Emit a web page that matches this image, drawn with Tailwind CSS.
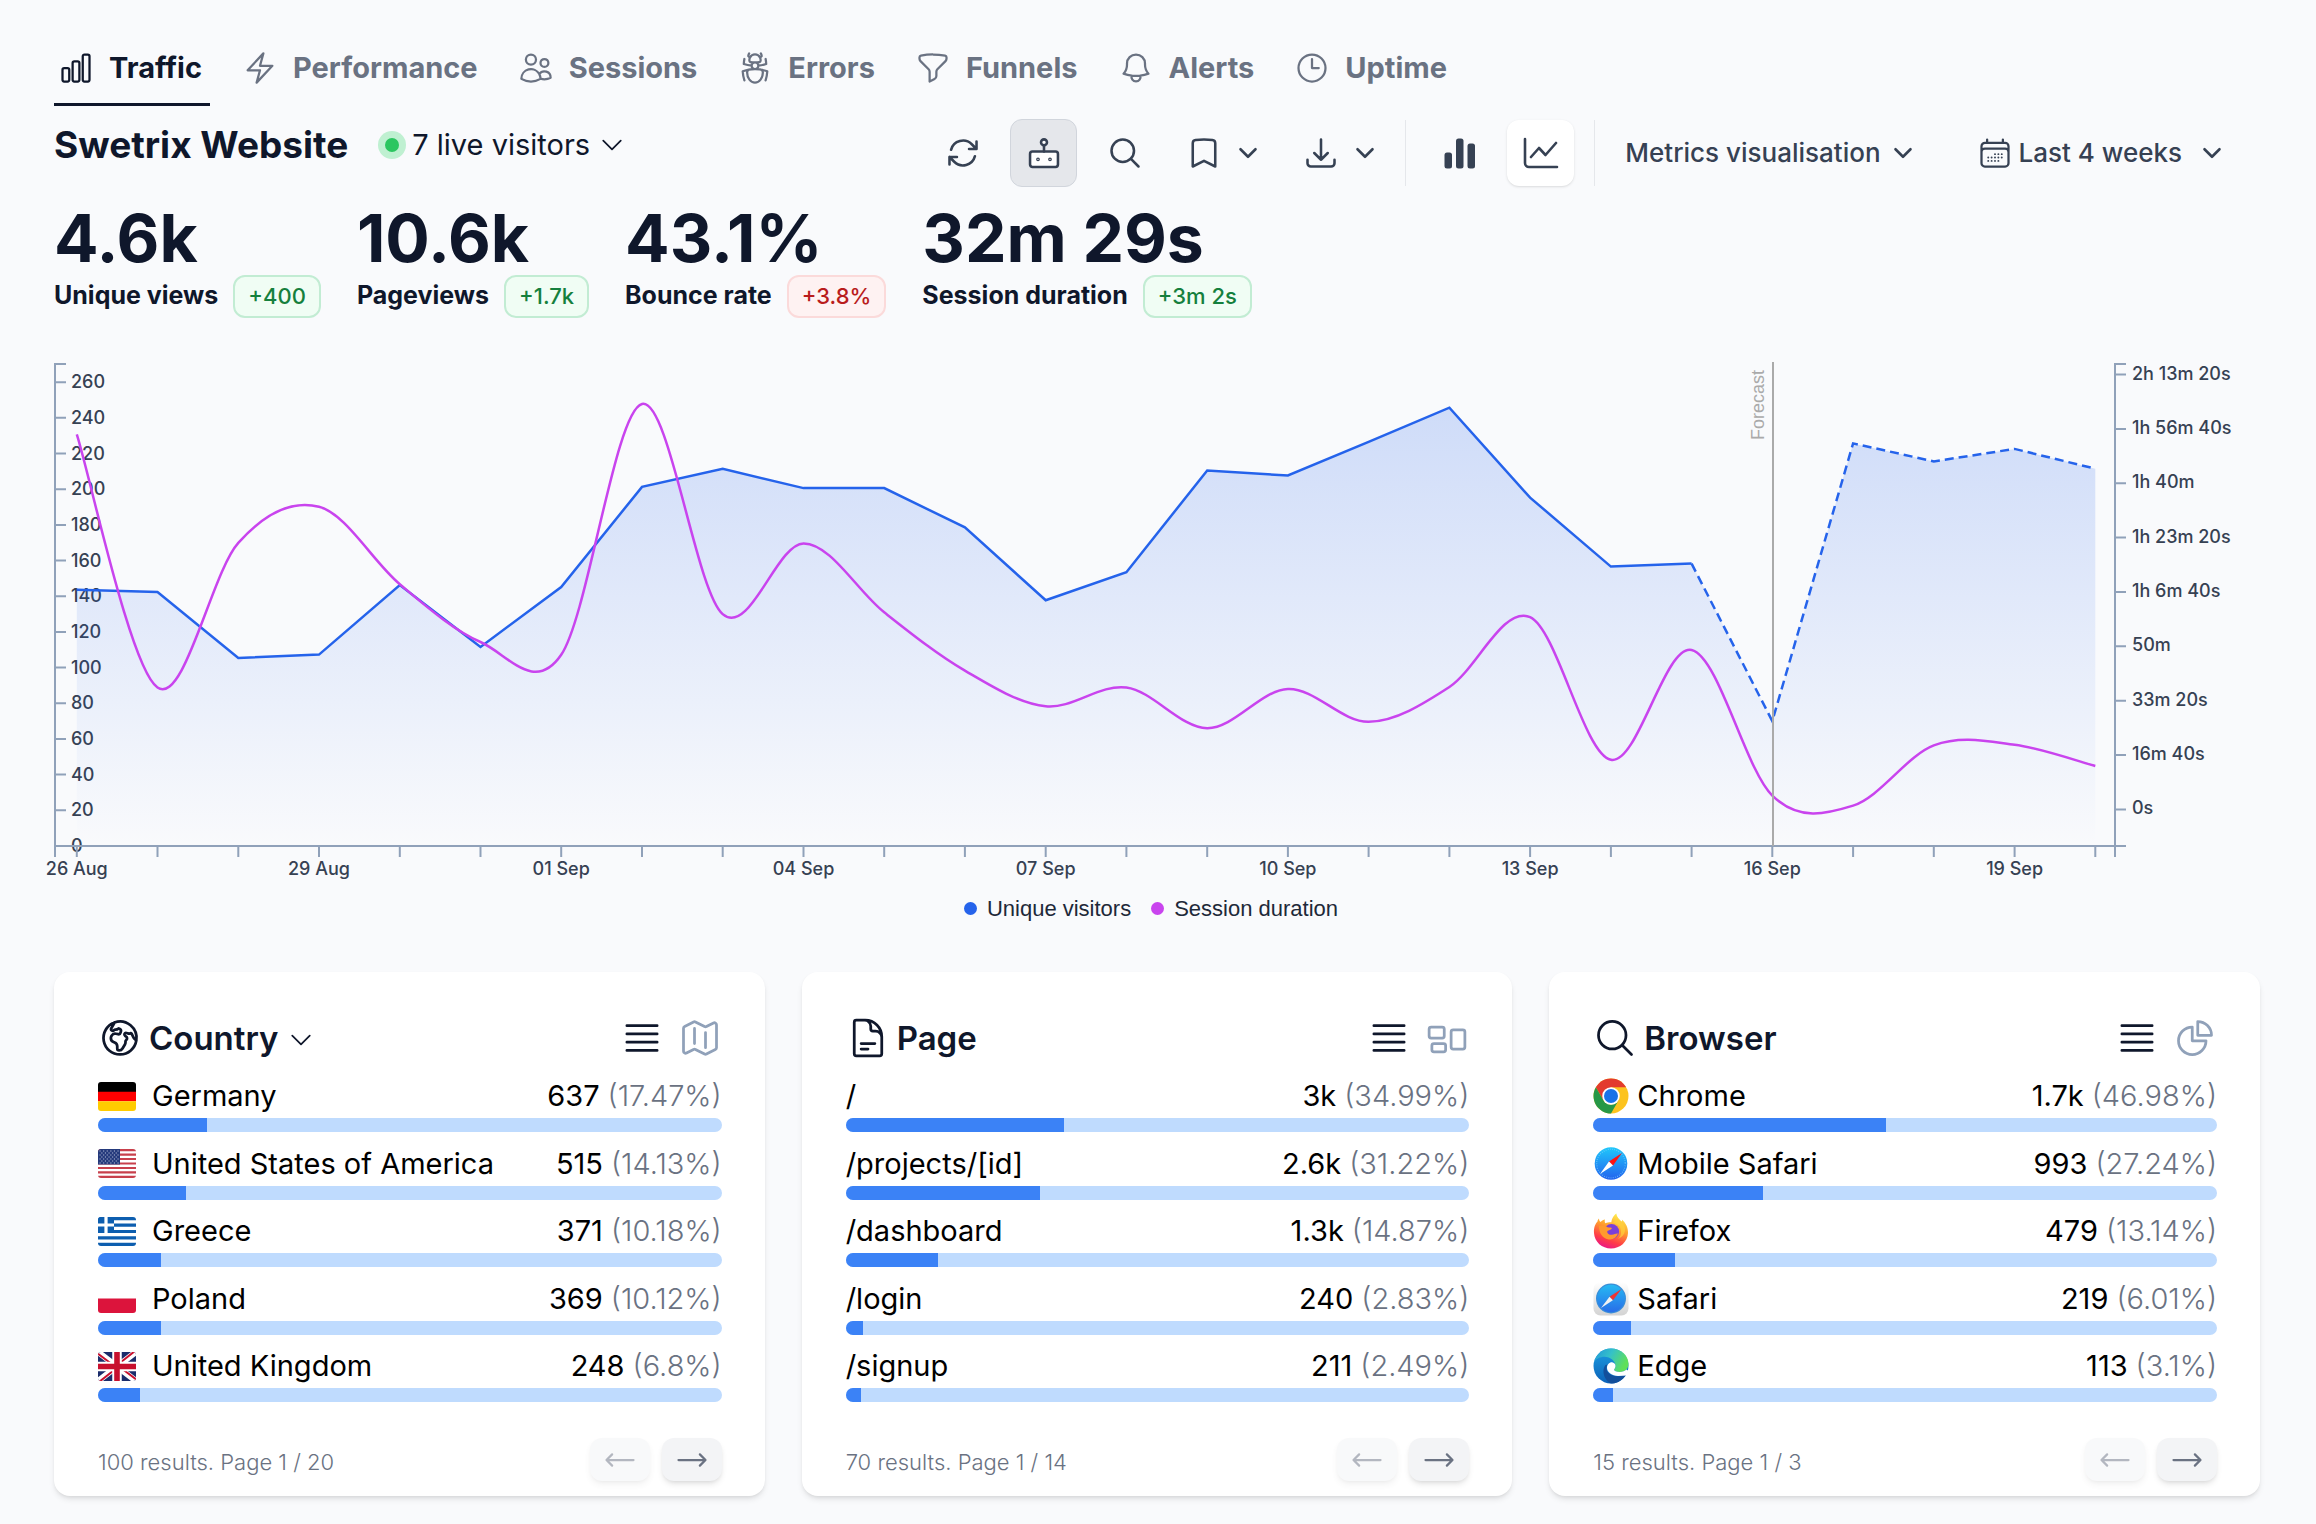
<!DOCTYPE html>
<html lang="en">
<head>
<meta charset="utf-8">
<meta name="viewport" content="width=device-width, initial-scale=1">
<title>Swetrix Website</title>
<script src="https://cdn.jsdelivr.net/npm/@tailwindcss/browser@4"></script>
</head>
<body class="min-h-screen bg-[#f9fafc] font-['Inter',sans-serif] text-slate-900">

<!-- Shared icons -->
<svg class="absolute size-0" aria-hidden="true">
  <symbol id="i-bars" viewBox="0 0 24 24"><path d="M3 13.125C3 12.504 3.504 12 4.125 12h2.25c.621 0 1.125.504 1.125 1.125v6.75C7.5 20.496 6.996 21 6.375 21h-2.25A1.125 1.125 0 0 1 3 19.875v-6.75ZM9.75 8.625c0-.621.504-1.125 1.125-1.125h2.25c.621 0 1.125.504 1.125 1.125v11.25c0 .621-.504 1.125-1.125 1.125h-2.25a1.125 1.125 0 0 1-1.125-1.125V8.625ZM16.5 4.125c0-.621.504-1.125 1.125-1.125h2.25C20.496 3 21 3.504 21 4.125v15.75c0 .621-.504 1.125-1.125 1.125h-2.25a1.125 1.125 0 0 1-1.125-1.125V4.125Z"/></symbol>
  <symbol id="i-bolt" viewBox="0 0 24 24"><path d="m3.75 13.5 10.5-11.25L12 10.5h8.25L9.75 21.75 12 13.5H3.75Z"/></symbol>
  <symbol id="i-users" viewBox="0 0 24 24"><path d="M15 19.128a9.38 9.38 0 0 0 2.625.372 9.337 9.337 0 0 0 4.121-.952 4.125 4.125 0 0 0-7.533-2.493M15 19.128v-.003c0-1.113-.285-2.16-.786-3.07M15 19.128v.106A12.318 12.318 0 0 1 8.624 21c-2.331 0-4.512-.645-6.374-1.766l-.001-.109a6.375 6.375 0 0 1 11.964-3.07M12 6.375a3.375 3.375 0 1 1-6.75 0 3.375 3.375 0 0 1 6.75 0Zm8.25 2.25a2.625 2.625 0 1 1-5.25 0 2.625 2.625 0 0 1 5.25 0Z"/></symbol>
  <symbol id="i-bug" viewBox="0 0 24 24"><path d="M12 12.75c1.148 0 2.278.08 3.383.237 1.037.146 1.866.966 1.866 2.013 0 3.728-2.35 6.75-5.25 6.75S6.75 18.728 6.75 15c0-1.046.83-1.867 1.866-2.013A24.204 24.204 0 0 1 12 12.75Zm0 0c2.883 0 5.647.508 8.207 1.44a23.91 23.91 0 0 1-1.152 6.06M12 12.75c-2.883 0-5.647.508-8.208 1.44.125 2.104.52 4.136 1.153 6.06M12 12.75a2.25 2.25 0 0 0 2.248-2.354M12 12.75a2.25 2.25 0 0 1-2.248-2.354M12 8.25c.995 0 1.971-.08 2.922-.236.403-.066.74-.358.795-.762a3.778 3.778 0 0 0-.399-2.25M12 8.25c-.995 0-1.97-.08-2.922-.236-.402-.066-.74-.358-.795-.762a3.734 3.734 0 0 1 .4-2.253M12 8.25a2.25 2.25 0 0 0-2.248 2.146M12 8.25a2.25 2.25 0 0 1 2.248 2.146M8.683 5a6.032 6.032 0 0 1-1.155-1.002c.07-.63.27-1.222.574-1.747m.581 2.749A3.75 3.75 0 0 1 15.318 5m0 0c.427-.283.815-.62 1.155-.999a4.471 4.471 0 0 0-.575-1.752M4.921 6a24.048 24.048 0 0 0-.392 3.314c1.668.546 3.416.914 5.223 1.082M19.08 6c.205 1.08.337 2.187.392 3.314a23.882 23.882 0 0 1-5.223 1.082"/></symbol>
  <symbol id="i-funnel" viewBox="0 0 24 24"><path d="M12 3c2.755 0 5.455.232 8.083.678.533.09.917.556.917 1.096v1.044a2.25 2.25 0 0 1-.659 1.591l-5.432 5.432a2.25 2.25 0 0 0-.659 1.591v2.927a2.25 2.25 0 0 1-1.244 2.013L9.75 21v-6.568a2.25 2.25 0 0 0-.659-1.591L3.659 7.409A2.25 2.25 0 0 1 3 5.818V4.774c0-.54.384-1.006.917-1.096A48.32 48.32 0 0 1 12 3Z"/></symbol>
  <symbol id="i-bell" viewBox="0 0 24 24"><path d="M14.857 17.082a23.848 23.848 0 0 0 5.454-1.31A8.967 8.967 0 0 1 18 9.75V9A6 6 0 0 0 6 9v.75a8.967 8.967 0 0 1-2.312 6.022c1.733.64 3.56 1.085 5.455 1.31m5.714 0a24.255 24.255 0 0 1-5.714 0m5.714 0a3 3 0 1 1-5.714 0"/></symbol>
  <symbol id="i-clock" viewBox="0 0 24 24"><path d="M12 6v6h4.5m4.5 0a9 9 0 1 1-18 0 9 9 0 0 1 18 0Z"/></symbol>
  <symbol id="i-chevron" viewBox="0 0 24 24"><path d="m19.5 8.25-7.5 7.5-7.5-7.5"/></symbol>
  <symbol id="i-refresh" viewBox="0 0 24 24"><path d="M16.023 9.348h4.992v-.001M2.985 19.644v-4.992m0 0h4.992m-4.993 0 3.181 3.183a8.25 8.25 0 0 0 13.803-3.7M4.031 9.865a8.25 8.25 0 0 1 13.803-3.7l3.181 3.182m0-4.991v4.99"/></symbol>
  <symbol id="i-robot" viewBox="0 0 24 24"><rect x="2.7" y="11" width="18.6" height="10.3" rx="1.6" fill="#fff"/><circle cx="12" cy="4.9" r="2" fill="#fff"/><path d="M12 7v4"/><circle cx="8" cy="16.2" r=".4"/><circle cx="16" cy="16.2" r=".4"/></symbol>
  <symbol id="i-search" viewBox="0 0 24 24"><path d="m21 21-5.197-5.197m0 0A7.5 7.5 0 1 0 5.196 5.196a7.5 7.5 0 0 0 10.607 10.607Z"/></symbol>
  <symbol id="i-bookmark" viewBox="0 0 24 24"><path d="M17.593 3.322c1.1.128 1.907 1.077 1.907 2.185V21L12 17.25 4.5 21V5.507c0-1.108.806-2.057 1.907-2.185a48.507 48.507 0 0 1 11.186 0Z"/></symbol>
  <symbol id="i-download" viewBox="0 0 24 24"><path d="M3 16.5v2.25A2.25 2.25 0 0 0 5.25 21h13.5A2.25 2.25 0 0 0 21 18.75V16.5M16.5 12 12 16.5m0 0L7.5 12m4.5 4.5V3"/></symbol>
  <symbol id="i-solidbars" viewBox="0 0 36 36"><g fill="currentColor" stroke="none"><rect x="2.500" y="17.500" width="7.500" height="16" rx="2.500"/><rect x="14" y="3.500" width="7.500" height="30" rx="2.500"/><rect x="25.500" y="8.500" width="7.500" height="25" rx="2.500"/></g></symbol>
  <symbol id="i-line" viewBox="0 0 36 36"><path stroke-width="2.6" d="M2 4v24a4 4 0 0 0 4 4h28M8 22l8-9 6.500 7L33 8"/></symbol>
  <symbol id="i-calendar" viewBox="0 0 24 24"><path d="M6.750 3v2.250M17.250 3v2.250M3 18.750V7.500a2.250 2.250 0 0 1 2.250-2.250h13.500A2.250 2.250 0 0 1 21 7.500v11.250m-18 0A2.250 2.250 0 0 0 5.250 21h13.500A2.250 2.250 0 0 0 21 18.750m-18 0v-7.500A2.250 2.250 0 0 1 5.250 9h13.500A2.250 2.250 0 0 1 21 11.250v7.500"/><path stroke-width="1.300" d="M12 12.750h0M14.250 12.750h0M16.500 12.750h0M7.500 15h0M9.750 15h0M12 15h0M14.250 15h0M16.500 15h0M7.500 17.250h0M9.750 17.250h0M12 17.250h0M14.250 17.250h0"/></symbol>
  <symbol id="i-globe" viewBox="0 0 24 24"><path d="m20.893 13.393-1.135-1.135a2.252 2.252 0 0 1-.421-.585l-1.080-2.160a.414.414 0 0 0-.663-.107.827.827 0 0 1-.812.210l-1.273-.363a.890.890 0 0 0-.738 1.595l.587.390c.590.395.674 1.230.172 1.732l-.2.2c-.212.212-.330.498-.330.796v.410c0 .409-.110.809-.320 1.158l-1.315 2.191a2.110 2.110 0 0 1-1.810 1.025 1.055 1.055 0 0 1-1.055-1.055v-1.172c0-.920-.560-1.747-1.414-2.089l-.655-.261a2.250 2.250 0 0 1-1.383-2.460l.007-.042a2.250 2.250 0 0 1 .290-.787l.090-.150a2.250 2.250 0 0 1 2.370-1.048l1.178.236a1.125 1.125 0 0 0 1.302-.795l.208-.730a1.125 1.125 0 0 0-.578-1.315l-.665-.332-.091.091a2.250 2.250 0 0 1-1.591.659h-.180c-.249 0-.487.1-.662.274a.931.931 0 0 1-1.458-1.137l1.411-2.353a2.250 2.250 0 0 0 .286-.760m11.928 9.869A9 9 0 0 0 8.965 3.525m11.928 9.868A9 9 0 1 1 8.965 3.525"/></symbol>
  <symbol id="i-doc" viewBox="0 0 24 24"><path d="M19.5 14.25v-2.625a3.375 3.375 0 0 0-3.375-3.375h-1.5A1.125 1.125 0 0 1 13.5 7.125v-1.5a3.375 3.375 0 0 0-3.375-3.375H8.25m0 12.75h7.5m-7.5 3H12M10.5 2.25H5.625c-.621 0-1.125.504-1.125 1.125v17.25c0 .621.504 1.125 1.125 1.125h12.75c.621 0 1.125-.504 1.125-1.125V11.25a9 9 0 0 0-9-9Z"/></symbol>
  <symbol id="i-list" viewBox="0 0 24 24"><path d="M3.75 5.25h16.5m-16.5 4.5h16.5m-16.5 4.5h16.5m-16.5 4.5h16.5"/></symbol>
  <symbol id="i-map" viewBox="0 0 24 24"><path d="M9 6.75V15m6-6v8.25m.503 3.498 4.875-2.437c.381-.19.622-.58.622-1.006V4.82c0-.836-.88-1.38-1.628-1.006l-3.869 1.934c-.317.159-.69.159-1.006 0L9.503 3.252a1.125 1.125 0 0 0-1.006 0L3.622 5.689C3.24 5.88 3 6.27 3 6.695V19.18c0 .836.88 1.38 1.628 1.006l3.869-1.934c.317-.159.69-.159 1.006 0l4.994 2.497c.317.158.69.158 1.006 0Z"/></symbol>
  <symbol id="i-group" viewBox="0 0 24 24"><path d="M2.25 7.125C2.25 6.504 2.754 6 3.375 6h6c.621 0 1.125.504 1.125 1.125v3.75c0 .621-.504 1.125-1.125 1.125h-6a1.125 1.125 0 0 1-1.125-1.125v-3.75ZM14.25 8.625c0-.621.504-1.125 1.125-1.125h5.25c.621 0 1.125.504 1.125 1.125v8.25c0 .621-.504 1.125-1.125 1.125h-5.25a1.125 1.125 0 0 1-1.125-1.125v-8.25ZM3.75 16.125c0-.621.504-1.125 1.125-1.125h5.25c.621 0 1.125.504 1.125 1.125v2.25c0 .621-.504 1.125-1.125 1.125h-5.25a1.125 1.125 0 0 1-1.125-1.125v-2.25Z"/></symbol>
  <symbol id="i-pie" viewBox="0 0 24 24"><path d="M10.5 6a7.5 7.5 0 1 0 7.5 7.5h-7.5V6ZM13.5 10.5H21A7.5 7.5 0 0 0 13.500 3v7.5Z"/></symbol>
  <symbol id="i-left" viewBox="0 0 24 24"><path d="M6.75 15.75 3 12m0 0 3.750-3.750M3 12h18"/></symbol>
  <symbol id="i-right" viewBox="0 0 24 24"><path d="M17.25 8.25 21 12m0 0-3.750 3.750M21 12H3"/></symbol>

  <symbol id="f-de" viewBox="0 0 38 29"><path fill="#000" d="M0 0h38v10H0z"/><path fill="#f00" d="M0 9.700h38v9.600H0z"/><path fill="#fc0" d="M0 19.300h38V29H0z"/></symbol>
  <symbol id="f-us" viewBox="0 0 38 29"><path fill="#fff" d="M0 0h38v29H0z"/><path stroke="#c8404c" stroke-width="2.230" d="M0 1.100h38M0 5.600h38M0 10h38M0 14.500h38M0 19h38M0 23.400h38M0 27.900h38"/><path fill="#253a7c" d="M0 0h22v15.600H0z"/><path stroke="#b9c1da" stroke-width="1.100" stroke-dasharray="1.100 2.500" d="M1.500 2h20M3.300 4h18M1.500 6h20M3.300 8h18M1.500 10h20M3.300 12h18M1.500 14h20"/></symbol>
  <symbol id="f-gr" viewBox="0 0 38 29"><path fill="#0d5eaf" d="M0 0h38v29H0z"/><path stroke="#fff" stroke-width="3.220" d="M0 4.800h38M0 11.300h38M0 17.700h38M0 24.200h38"/><path fill="#0d5eaf" d="M0 0h16v16.100H0z"/><path stroke="#fff" stroke-width="3.220" d="M0 8h16M8 0v16.100"/></symbol>
  <symbol id="f-pl" viewBox="0 0 38 29"><path fill="#fff" d="M0 0h38v14.500H0z"/><path fill="#dc143c" d="M0 14.500h38V29H0z"/></symbol>
  <symbol id="f-gb" viewBox="0 0 38 29"><path fill="#1b2c6b" d="M0 0h38v29H0z"/><path stroke="#fff" stroke-width="6" d="m0 0 38 29M38 0 0 29"/><path stroke="#c8102e" stroke-width="2" d="m-1 1 20 15M18 14 37-1M39 28 19 13M20 15 1 30"/><path stroke="#fff" stroke-width="9.500" d="M19 0v29M0 14.500h38"/><path stroke="#c8102e" stroke-width="5.600" d="M19 0v29M0 14.500h38"/></symbol>

  <linearGradient id="g-saf" x1="0" y1="0" x2="0" y2="1"><stop offset="0" stop-color="#1fc8fb"/><stop offset="1" stop-color="#2362ee"/></linearGradient>
  <linearGradient id="g-tile" x1="0" y1="0" x2="0" y2="1"><stop offset="0" stop-color="#fff"/><stop offset="1" stop-color="#d3d3d3"/></linearGradient>
  <linearGradient id="g-fox" x1=".7" y1="0" x2=".3" y2="1"><stop offset="0" stop-color="#fff14f"/><stop offset=".4" stop-color="#ffa02e"/><stop offset=".75" stop-color="#ff3c47"/><stop offset="1" stop-color="#e8148b"/></linearGradient>
  <linearGradient id="g-edge1" x1="0" y1="0" x2="1" y2=".4"><stop offset="0" stop-color="#2196dc"/><stop offset=".5" stop-color="#35c1c8"/><stop offset="1" stop-color="#5fe05a"/></linearGradient>
  <linearGradient id="g-edge2" x1="0" y1="0" x2="0" y2="1"><stop offset="0" stop-color="#1b9de2"/><stop offset="1" stop-color="#0d62b8"/></linearGradient>
  <symbol id="b-chrome" viewBox="0 0 36 36"><circle cx="18" cy="18" r="17.500" fill="#fcc31e"/><path fill="#e33b2e" d="M2.850 9.250A17.500 17.500 0 0 1 33.150 9.250H18L10.420 22.370Z"/><path fill="#279847" d="M2.850 9.250A17.500 17.500 0 0 0 18 35.500L25.580 22.370A8.750 8.750 0 0 1 10.420 22.370Z"/><circle cx="18" cy="18" r="8.750" fill="#fff"/><circle cx="18" cy="18" r="7" fill="#1a73e8"/></symbol>
  <symbol id="b-msafari" viewBox="0 0 36 36"><circle cx="18" cy="17.500" r="16.300" fill="url(#g-saf)"/><circle cx="18" cy="17.500" r="14.300" fill="none" stroke="#7fd0fb" stroke-width="1.200" stroke-dasharray=".6 1.600"/><path fill="#f11" d="M29 7 16 15.500l4 4Z"/><path fill="#fff" d="M7 28l9-12.500 4 4Z"/></symbol>
  <symbol id="b-firefox" viewBox="0 0 36 36"><path fill="url(#g-fox)" d="M1 20C.5 14 3 10 4.500 8.500 4.500 7 5.500 6 6 5.500c0 2 .8 3 1.600 3.600C9 7.500 10.500 6.500 12 6.500c-.6 1.800-.2 3 .4 3.800 2-1 4.600-1.200 6-1 0-3 2.300-7 4.900-8.800.4 3.500 3 5.500 5.200 8 .7-.4.6-1.300.3-2 3.700 3 6.500 8 6.200 13.500-.4 9-8 15.500-17 15.500S1.500 29 1 20Z"/><circle cx="18.500" cy="18.500" r="7.600" fill="#7a3fd8"/><path fill="#ff9a2e" d="M6 13c4-1 7 0 8.500 1.200 2 .2 3.500.3 4.500.8-.8 2-3.500 2-4.600 3-.6 1.800.9 4 4.300 3.800 3-.2 3.600-1.400 6.300-1.200-1.500 4.400-5 6.400-9 5.900C9.500 25.700 6 20 6 13Z"/><path fill="#ffd23c" d="M20 10c5 .5 8 4 8 9 0 3-1 5-3 7 8-3 9-12 4-16l-5-4Z" opacity=".7"/></symbol>
  <symbol id="b-safari" viewBox="0 0 36 36"><rect x=".5" y="1" width="35" height="33.500" rx="7" fill="url(#g-tile)"/><circle cx="18" cy="17.500" r="15" fill="#3a8ed8"/><circle cx="18" cy="17.500" r="13.800" fill="url(#g-saf)" opacity=".75"/><path fill="#e33" d="M28.500 8 16.500 15.800l3.400 3.400Z"/><path fill="#f2f2f2" d="M8 27l8.500-11.200 3.400 3.400Z"/></symbol>
  <symbol id="b-edge" viewBox="0 0 36 36"><circle cx="18" cy="18" r="17.500" fill="url(#g-edge2)"/><path fill="url(#g-edge1)" d="M1.200 14C3 6 9.500.5 18 .5c10 0 17.500 7 17.500 15.500 0 5-4 8-8.600 8-3.600 0-5.900-1.200-5.900-2.200 0-.7 1.500-1.300 1.500-4 0-4.500-5-9-11-9C7 8.800 3 11 1.200 14Z"/><path fill="#134f9b" d="M12.500 17c-4 5-2 14 4.500 18.300 8 .8 13.500-4 16-8.800-10 4.500-19.500 0-19.500-6 0-2 .5-3 1-4Z"/><path fill="#fff" d="M14 20c0-3 2-5.700 5-5.700 2 .2 3.500 1.700 3.500 3.700 0 2-1.500 3.200-1.500 3.800 0 1 2.300 2.200 5.900 2.200 2.600 0 5-1 6.500-2.500l3 2-2.500 4C31 27.500 28 28 25 28c-6 0-11-4-11-8Z"/></symbol>
</svg>

<nav aria-label="Project views" class="flex gap-7 px-[54px] pt-8 text-[29px] font-bold leading-9 text-gray-500">
  <a href="#" aria-current="page" class="flex h-[74px] items-center gap-[15px] border-b-[3px] border-slate-900 pl-1 pr-2 text-slate-900"><svg class="size-9 fill-none stroke-current stroke-[1.5] [stroke-linecap:round] [stroke-linejoin:round]"><use href="#i-bars"/></svg>Traffic</a>
  <a href="#" class="flex h-[74px] items-center gap-[15px] border-b-[3px] border-transparent pl-1 pr-2"><svg class="size-9 fill-none stroke-current stroke-[1.5] [stroke-linecap:round] [stroke-linejoin:round]"><use href="#i-bolt"/></svg>Performance</a>
  <a href="#" class="flex h-[74px] items-center gap-[15px] border-b-[3px] border-transparent pl-1 pr-2"><svg class="size-9 fill-none stroke-current stroke-[1.5] [stroke-linecap:round] [stroke-linejoin:round]"><use href="#i-users"/></svg>Sessions</a>
  <a href="#" class="flex h-[74px] items-center gap-[15px] border-b-[3px] border-transparent pl-1 pr-2"><svg class="size-9 fill-none stroke-current stroke-[1.5] [stroke-linecap:round] [stroke-linejoin:round]"><use href="#i-bug"/></svg>Errors</a>
  <a href="#" class="flex h-[74px] items-center gap-[15px] border-b-[3px] border-transparent pl-1 pr-2"><svg class="size-9 fill-none stroke-current stroke-[1.5] [stroke-linecap:round] [stroke-linejoin:round]"><use href="#i-funnel"/></svg>Funnels</a>
  <a href="#" class="flex h-[74px] items-center gap-[15px] border-b-[3px] border-transparent pl-1 pr-2"><svg class="size-9 fill-none stroke-current stroke-[1.5] [stroke-linecap:round] [stroke-linejoin:round]"><use href="#i-bell"/></svg>Alerts</a>
  <a href="#" class="flex h-[74px] items-center gap-[15px] border-b-[3px] border-transparent pl-1 pr-2"><svg class="size-9 fill-none stroke-current stroke-[1.5] [stroke-linecap:round] [stroke-linejoin:round]"><use href="#i-clock"/></svg>Uptime</a>
</nav>

<main>
  <header class="flex items-start justify-between px-[54px] pt-[13px]">
    <div class="flex h-[52px] items-center">
      <h1 class="text-[37px] font-bold leading-[52px]">Swetrix Website</h1>
      <button type="button" class="ml-[30px] flex items-center text-[29px] leading-9">
        <span class="mr-1.5 flex size-7 items-center justify-center rounded-full bg-[#bff0d1]"><span class="size-3.5 rounded-full bg-[#2bc660]"></span></span>
        7 live visitors
        <svg class="ml-2 size-7 fill-none stroke-current stroke-[1.5] [stroke-linecap:round] [stroke-linejoin:round]"><use href="#i-chevron"/></svg>
      </button>
    </div>

    <div class="flex h-[68px] items-center text-[26px] font-medium leading-9 text-gray-700">
      <button type="button" aria-label="Refresh" class="flex h-[68px] w-[67px] items-center justify-center"><svg class="size-9 fill-none stroke-current stroke-[1.7] [stroke-linecap:round] [stroke-linejoin:round]"><use href="#i-refresh"/></svg></button>
      <button type="button" aria-label="Bot traffic" class="ml-3.5 flex h-[68px] w-[67px] items-center justify-center rounded-xl border border-gray-300 bg-gray-200"><svg class="size-9 fill-none stroke-current stroke-[1.7] [stroke-linecap:round] [stroke-linejoin:round]"><use href="#i-robot"/></svg></button>
      <button type="button" aria-label="Search" class="ml-3.5 flex h-[68px] w-[67px] items-center justify-center"><svg class="size-9 fill-none stroke-current stroke-[1.7] [stroke-linecap:round] [stroke-linejoin:round]"><use href="#i-search"/></svg></button>
      <button type="button" aria-label="Segments" class="ml-7 flex h-[68px] items-center gap-3.5"><svg class="size-9 fill-none stroke-current stroke-[1.7] [stroke-linecap:round] [stroke-linejoin:round]"><use href="#i-bookmark"/></svg><svg class="size-6 fill-none stroke-current stroke-[2.6] [stroke-linecap:round] [stroke-linejoin:round]"><use href="#i-chevron"/></svg></button>
      <button type="button" aria-label="Export" class="ml-[43px] flex h-[68px] items-center gap-3.5"><svg class="size-9 fill-none stroke-current stroke-[1.7] [stroke-linecap:round] [stroke-linejoin:round]"><use href="#i-download"/></svg><svg class="size-6 fill-none stroke-current stroke-[2.6] [stroke-linecap:round] [stroke-linejoin:round]"><use href="#i-chevron"/></svg></button>
      <div class="ml-7 flex h-[66px] items-center gap-3.5 border-x border-gray-200 px-5">
        <button type="button" aria-label="Bar chart" class="flex h-[66px] w-[67px] items-center justify-center"><svg class="size-9"><use href="#i-solidbars"/></svg></button>
        <button type="button" aria-label="Line chart" class="flex h-[66px] w-[67px] items-center justify-center rounded-xl bg-white shadow-sm"><svg class="size-9 fill-none stroke-current [stroke-linecap:round] [stroke-linejoin:round]"><use href="#i-line"/></svg></button>
      </div>
      <button type="button" class="ml-[30px] flex h-[68px] items-center gap-2.5">Metrics visualisation<svg class="size-6 fill-none stroke-current stroke-[2.6] [stroke-linecap:round] [stroke-linejoin:round]"><use href="#i-chevron"/></svg></button>
      <button type="button" class="ml-[62px] mr-[38px] flex h-[68px] items-center"><svg class="mr-1.5 size-9 fill-none stroke-current stroke-[1.5] [stroke-linecap:round] [stroke-linejoin:round]"><use href="#i-calendar"/></svg>Last 4 weeks<svg class="ml-[18px] size-6 fill-none stroke-current stroke-[2.6] [stroke-linecap:round] [stroke-linejoin:round]"><use href="#i-chevron"/></svg></button>
    </div>
  </header>

  <dl class="flex gap-9 px-[54px] pt-[18px]">
    <div class="flex flex-col-reverse gap-[3px]"><dt class="flex h-11 items-center gap-[15px] text-[25px] font-bold">Unique views<span class="flex h-[43px] items-center rounded-xl border-2 border-[#c2ecd3] bg-green-50 px-[13px] text-[22px] font-medium text-[#15803d]">+400</span></dt><dd class="text-[66px] font-bold leading-[66px]">4.6k</dd></div>
    <div class="flex flex-col-reverse gap-[3px]"><dt class="flex h-11 items-center gap-[15px] text-[25px] font-bold">Pageviews<span class="flex h-[43px] items-center rounded-xl border-2 border-[#c2ecd3] bg-green-50 px-[13px] text-[22px] font-medium text-[#15803d]">+1.7k</span></dt><dd class="text-[66px] font-bold leading-[66px]">10.6k</dd></div>
    <div class="flex flex-col-reverse gap-[3px]"><dt class="flex h-11 items-center gap-[15px] text-[25px] font-bold">Bounce rate<span class="flex h-[43px] items-center rounded-xl border-2 border-[#fbdada] bg-red-50 px-[13px] text-[22px] font-medium text-[#b91c1c]">+3.8%</span></dt><dd class="text-[66px] font-bold leading-[66px]">43.1%</dd></div>
    <div class="flex flex-col-reverse gap-[3px]"><dt class="flex h-11 items-center gap-[15px] text-[25px] font-bold">Session duration<span class="flex h-[43px] items-center rounded-xl border-2 border-[#c2ecd3] bg-green-50 px-[13px] text-[22px] font-medium text-[#15803d]">+3m 2s</span></dt><dd class="text-[66px] font-bold leading-[66px]">32m 29s</dd></div>
  </dl>

  <section aria-label="Visitors over time" class="pt-8">
    <svg id="chart" viewBox="0 0 2316 540" class="block w-full fill-none" role="img" aria-label="Unique visitors and session duration, 26 Aug to 20 Sep"></svg>
    <div class="flex h-9 items-center justify-center gap-5 pr-3.5 font-['Liberation_Sans',sans-serif] text-[22px] text-gray-800">
      <span class="flex items-center gap-2.5"><i class="size-[13px] rounded-full bg-[#2563eb]"></i>Unique visitors</span>
      <span class="flex items-center gap-2.5"><i class="size-[13px] rounded-full bg-[#c944ee]"></i>Session duration</span>
    </div>
  </section>

  <section id="panels" aria-label="Breakdowns" class="grid grid-cols-3 gap-[37px] pb-7 pl-[54px] pr-14 pt-[46px]"></section>
</main>

<script>
const visitors = [143.6,142.3,105.4,107.3,146.3,111.6,145.1,201.3,211.4,200.6,200.6,178.6,137.7,153.5,210.5,207.7,226.5,245.7,195.3,156.6,158.3,70,225.7,215.6,222.6,211.5];
const duration = [84.4,337.5,192.9,156.7,234.2,292,304.8,54,264.1,193.4,262.3,320.6,356.3,337.5,378.2,339,371.8,337,267.2,409.8,300,445.6,455.6,395.4,394.7,416];
const X = i => +(76.8 + i * 80.74).toFixed(1), base = 496, Y = v => +(base - v * 1.784).toFixed(1);
const pts = visitors.map((v, i) => [X(i), Y(v)]);
const line = p => 'M' + p.map(q => q.join(' ')).join('L');
const dur = duration.map((y, i) => [X(i), y]);
let curve = 'M' + dur[0].join(' ');
for (let i = 0; i < dur.length - 1; i++) {
  const a = dur[i - 1] || dur[i], b = dur[i], c = dur[i + 1], d = dur[i + 2] || c;
  curve += `C${b[0] + (c[0] - a[0]) / 6} ${b[1] + (c[1] - a[1]) / 6} ${c[0] - (d[0] - b[0]) / 6} ${c[1] - (d[1] - b[1]) / 6} ${c[0]} ${c[1]}`;
}
let axes = `M66 14H55V507M55 ${base}H2126M2126 14H2115V507`, labels = '';
for (let v = 20; v <= 260; v += 20) axes += `M55 ${Y(v)}h11`;
for (let v = 0; v <= 260; v += 20) labels += `<text x="71" y="${Y(v) + 6}">${v}</text>`;
for (let i = 0; i < 26; i++) axes += `M${X(i)} ${base}v11`;
['26 Aug','29 Aug','01 Sep','04 Sep','07 Sep','10 Sep','13 Sep','16 Sep','19 Sep'].forEach((t, i) => labels += `<text x="${X(i * 3)}" y="525" text-anchor="middle">${t}</text>`);
['0s','16m 40s','33m 20s','50m','1h 6m 40s','1h 23m 20s','1h 40m','1h 56m 40s','2h 13m 20s'].forEach((t, i) => {
  const y = +(459.4 - i * 54.35).toFixed(1);
  axes += `M2115 ${y}h11`;
  labels += `<text x="2132" y="${y + 5}">${t}</text>`;
});
document.getElementById('chart').innerHTML = `
  <defs><linearGradient id="area" x1="0" y1="0" x2="0" y2="1"><stop offset="0" stop-color="#2563eb" stop-opacity=".2"/><stop offset="1" stop-color="#2563eb" stop-opacity="0"/></linearGradient></defs>
  <g class="fill-gray-700 text-[18px] font-medium">${labels}</g>
  <path d="${axes}" class="stroke-slate-400 stroke-2"/>
  <path d="${line(pts)}V${base}H76.8Z" fill="url(#area)"/>
  <path d="${line(pts.slice(0, 21))}" class="stroke-[#2563eb] stroke-[2.5]"/>
  <path d="${line(pts.slice(20))}" stroke-dasharray="9 5" class="stroke-[#2563eb] stroke-[2.5]"/>
  <path d="${curve}" class="stroke-[#c944ee] stroke-[2.5]"/>
  <path d="M1773 12V496" class="stroke-[#aaa] stroke-2"/>
  <text transform="translate(1764 90) rotate(-90)" class="fill-[#aaa] font-['Liberation_Sans',sans-serif] text-[18px]">Forecast</text>`;

const panels = [
  { title: 'Country', icon: 'i-globe', alt: 'i-map', altLabel: 'Map view', menu: true, total: '100 results. Page 1 / 20', kind: 'flag', rows: [['Germany','637','17.47','f-de'],['United States of America','515','14.13','f-us'],['Greece','371','10.18','f-gr'],['Poland','369','10.12','f-pl'],['United Kingdom','248','6.8','f-gb']] },
  { title: 'Page', icon: 'i-doc', alt: 'i-group', altLabel: 'Flow view', total: '70 results. Page 1 / 14', rows: [['/','3k','34.99'],['/projects/[id]','2.6k','31.22'],['/dashboard','1.3k','14.87'],['/login','240','2.83'],['/signup','211','2.49']] },
  { title: 'Browser', icon: 'i-search', alt: 'i-pie', altLabel: 'Pie chart', total: '15 results. Page 1 / 3', kind: 'logo', rows: [['Chrome','1.7k','46.98','b-chrome'],['Mobile Safari','993','27.24','b-msafari'],['Firefox','479','13.14','b-firefox'],['Safari','219','6.01','b-safari'],['Edge','113','3.1','b-edge']] }
];
const mark = (kind, id) => kind === 'flag'
  ? `<svg class="mr-4 h-[29px] w-[38px] rounded-[3px]"><use href="#${id}"/></svg>`
  : kind === 'logo' ? `<svg class="mr-2 size-9"><use href="#${id}"/></svg>` : '';
document.getElementById('panels').innerHTML = panels.map(p => `
  <article class="rounded-2xl bg-white pb-[15px] pl-11 pr-[43px] pt-11 shadow-md">
    <div class="flex h-11 items-center text-slate-900">
      <svg class="mr-[7px] size-11 fill-none stroke-current stroke-[1.5] [stroke-linecap:round] [stroke-linejoin:round]"><use href="#${p.icon}"/></svg>
      <h2 class="text-[33px] font-semibold leading-11">${p.title}</h2>
      ${p.menu ? `<button type="button" aria-label="Change breakdown" class="ml-2"><svg class="mt-1 size-7 fill-none stroke-current stroke-[1.5] [stroke-linecap:round] [stroke-linejoin:round]"><use href="#i-chevron"/></svg></button>` : ''}
      <button type="button" aria-label="List view" class="ml-auto"><svg class="size-11 fill-none stroke-current stroke-[1.5] [stroke-linecap:round] [stroke-linejoin:round]"><use href="#i-list"/></svg></button>
      <button type="button" aria-label="${p.altLabel}" class="ml-3.5 text-slate-400"><svg class="size-11 fill-none stroke-current stroke-[1.5] [stroke-linecap:round] [stroke-linejoin:round]"><use href="#${p.alt}"/></svg></button>
    </div>
    <ul class="mt-3.5 flex h-[328px] flex-col justify-between text-[29px] leading-11 text-black">
      ${p.rows.map(r => `<li>
        <div class="flex h-11 items-center">${mark(p.kind, r[3])}<span>${r[0]}</span><span class="ml-auto">${r[1]}</span><span class="ml-2 font-light text-gray-500">(${r[2]}%)</span></div>
        <div class="h-3.5 overflow-hidden rounded-full bg-[#bfdbfe]"><div class="h-full bg-[#3b82f6]" style="width:${r[2]}%"></div></div>
      </li>`).join('')}
    </ul>
    <div class="mt-9 flex h-[43px] items-center text-gray-500">
      <span class="pt-1.5 text-[22px] font-light">${p.total}</span>
      <button type="button" disabled aria-label="Previous page" class="ml-auto flex h-[43px] w-[60px] items-center justify-center rounded-xl bg-gray-100 opacity-50 shadow-md"><svg class="size-9 fill-none stroke-current stroke-[1.5] [stroke-linecap:round] [stroke-linejoin:round]"><use href="#i-left"/></svg></button>
      <button type="button" aria-label="Next page" class="ml-3 flex h-[43px] w-[60px] items-center justify-center rounded-xl bg-gray-100 shadow-md"><svg class="size-9 fill-none stroke-current stroke-[1.5] [stroke-linecap:round] [stroke-linejoin:round]"><use href="#i-right"/></svg></button>
    </div>
  </article>`).join('');
</script>
</body>
</html>
